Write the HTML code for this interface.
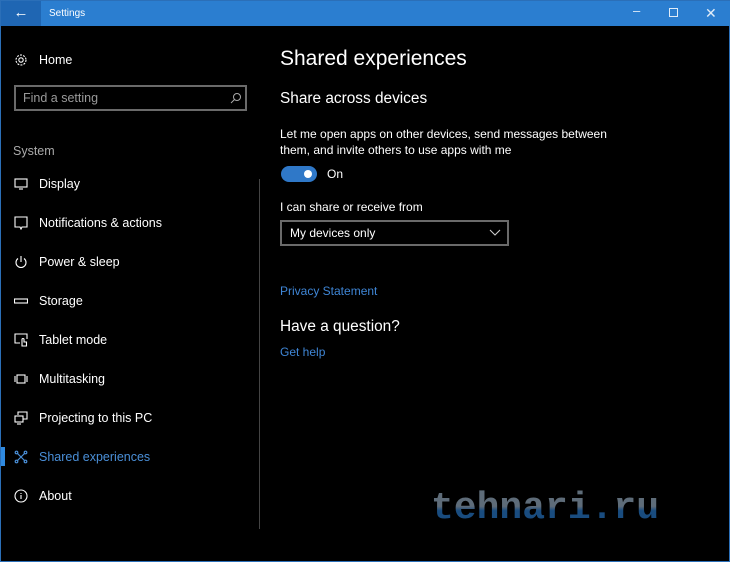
<!DOCTYPE html>
<html><head><meta charset="utf-8"><style>
*{margin:0;padding:0;box-sizing:border-box}
body{width:730px;height:562px;background:#000;font-family:"Liberation Sans","DejaVu Sans",sans-serif;color:#fff;position:relative;overflow:hidden;border:1px solid #2b6fb8}
.tb{position:absolute;left:0;top:0;width:730px;height:25px;background:#2b7ed0}
.back{position:absolute;left:0;top:0;width:40px;height:25px;background:#1f66b3;color:#fff;font-size:15px;text-align:center;line-height:24px}
.ttl{position:absolute;left:48px;top:7px;font-size:10px;color:#fff}
.wc{position:absolute;top:5px;color:#e0ecf8;font-size:12px}
.a{position:absolute;white-space:nowrap}
.nav{font-size:12.5px;color:#fff}
.ic{position:absolute;left:13px;width:14px;height:14px}
.sb{position:absolute;left:258px;top:178px;width:1px;height:350px;background:#444}
</style></head><body>
<div class="tb"></div>
<div class="back">&#8592;</div>
<div class="ttl">Settings</div>
<div class="wc" style="left:632px;top:2px;font-size:13px">–</div>
<div class="wc" style="left:668px;top:7px;width:9px;height:9px;border:1px solid #e0ecf8"></div>
<div class="wc" style="left:704px;top:4px;font-size:14px">✕</div>

<svg class="ic" style="top:52px" viewBox="0 0 14 14" fill="none" stroke="#fff" stroke-width="1.1"><circle cx="7" cy="7" r="2.2"/><circle cx="7" cy="7" r="5" stroke-dasharray="2 1.2"/></svg>
<div class="a nav" style="left:38px;top:52px">Home</div>
<div class="a" style="left:13px;top:84px;width:233px;height:26px;border:2px solid #6a6a6a"></div>
<div class="a" style="left:22px;top:90px;font-size:12.5px;color:#9a9a9a">Find a setting</div>
<svg class="a" style="left:229px;top:91px" width="12" height="12" viewBox="0 0 12 12" fill="none" stroke="#aaa" stroke-width="1"><circle cx="7" cy="5" r="3.5"/><path d="M4.5 7.5L1 11"/></svg>
<div class="a" style="left:12px;top:143px;font-size:12.5px;color:#aaa">System</div>

<svg class="ic" style="top:176px" viewBox="0 0 14 14" fill="none" stroke="#fff" stroke-width="1.1"><rect x="1" y="2" width="12" height="8"/><path d="M5 12h4"/></svg>
<div class="a nav" style="left:38px;top:176px">Display</div>
<svg class="ic" style="top:215px" viewBox="0 0 14 14" fill="none" stroke="#fff" stroke-width="1.1"><path d="M1 1h12v10H8l-1 2-1-2H1z"/></svg>
<div class="a nav" style="left:38px;top:215px">Notifications &amp; actions</div>
<svg class="ic" style="top:254px" viewBox="0 0 14 14" fill="none" stroke="#fff" stroke-width="1.1"><path d="M4 3.5A5 5 0 1 0 10 3.5M7 1v6"/></svg>
<div class="a nav" style="left:38px;top:254px">Power &amp; sleep</div>
<svg class="ic" style="top:293px" viewBox="0 0 14 14" fill="none" stroke="#fff" stroke-width="1.1"><rect x="0.5" y="5" width="13" height="4"/></svg>
<div class="a nav" style="left:38px;top:293px">Storage</div>
<svg class="ic" style="top:332px" viewBox="0 0 14 14" fill="none" stroke="#fff" stroke-width="1.1"><path d="M6 10H1V1h12v5"/><path d="M8 13V6.5a1 1 0 0 1 2 0V9h2.5v4z"/></svg>
<div class="a nav" style="left:38px;top:332px">Tablet mode</div>
<svg class="ic" style="top:371px" viewBox="0 0 14 14" fill="none" stroke="#fff" stroke-width="1.1"><rect x="3" y="3" width="8" height="8"/><path d="M1 4v6M13 4v6"/></svg>
<div class="a nav" style="left:38px;top:371px">Multitasking</div>
<svg class="ic" style="top:410px" viewBox="0 0 14 14" fill="none" stroke="#fff" stroke-width="1.1"><path d="M4 4V1h9v7h-4"/><rect x="1" y="5" width="8" height="6"/><path d="M3 13h4"/></svg>
<div class="a nav" style="left:38px;top:410px">Projecting to this PC</div>
<div class="a" style="left:0px;top:446px;width:4px;height:19px;background:#2f8ae0"></div>
<svg class="ic" style="top:449px" viewBox="0 0 14 14" fill="none" stroke="#4a8fd8" stroke-width="1.2"><path d="M3 3l8 8M11 3l-8 8"/><circle cx="2.5" cy="2.5" r="1.3"/><circle cx="11.5" cy="2.5" r="1.3"/><circle cx="2.5" cy="11.5" r="1.3"/><circle cx="11.5" cy="11.5" r="1.3"/></svg>
<div class="a nav" style="left:38px;top:449px;color:#4a8fd8">Shared experiences</div>
<svg class="ic" style="top:488px" viewBox="0 0 14 14" fill="none" stroke="#fff" stroke-width="1.1"><circle cx="7" cy="7" r="6"/><path d="M7 6v4M7 4v1"/></svg>
<div class="a nav" style="left:38px;top:488px">About</div>
<div class="sb"></div>

<div class="a" style="left:279px;top:46px;font-size:21px">Shared experiences</div>
<div class="a" style="left:279px;top:89px;font-size:15.4px">Share across devices</div>
<div class="a" style="left:279px;top:125px;font-size:12px;line-height:16px">Let me open apps on other devices, send messages between<br>them, and invite others to use apps with me</div>
<div class="a" style="left:280px;top:165px;width:36px;height:16px;border-radius:8px;background:#2f78c8"></div>
<div class="a" style="left:303px;top:169px;width:8px;height:8px;border-radius:50%;background:#fff"></div>
<div class="a" style="left:326px;top:166px;font-size:12px">On</div>
<div class="a" style="left:279px;top:199px;font-size:12px">I can share or receive from</div>
<div class="a" style="left:279px;top:219px;width:229px;height:26px;border:2px solid #6a6a6a"></div>
<div class="a" style="left:289px;top:225px;font-size:12px">My devices only</div>
<svg class="a" style="left:488px;top:228px" width="12" height="8" viewBox="0 0 12 8" fill="none" stroke="#ccc" stroke-width="1.1"><path d="M1 1l5 5 5-5"/></svg>
<div class="a" style="left:279px;top:283px;font-size:12px;color:#3f86d6">Privacy Statement</div>
<div class="a" style="left:279px;top:317px;font-size:15.4px">Have a question?</div>
<div class="a" style="left:279px;top:344px;font-size:12px;color:#3f86d6">Get help</div>

<div class="a" style="left:430px;top:486px;font-size:38px;font-weight:bold;letter-spacing:0px;font-family:'Liberation Mono',monospace;background:linear-gradient(#6f7f8f 45%,#1e5a96 55%);-webkit-background-clip:text;background-clip:text;color:transparent;opacity:.85">tehnari.ru</div>
</body></html>
